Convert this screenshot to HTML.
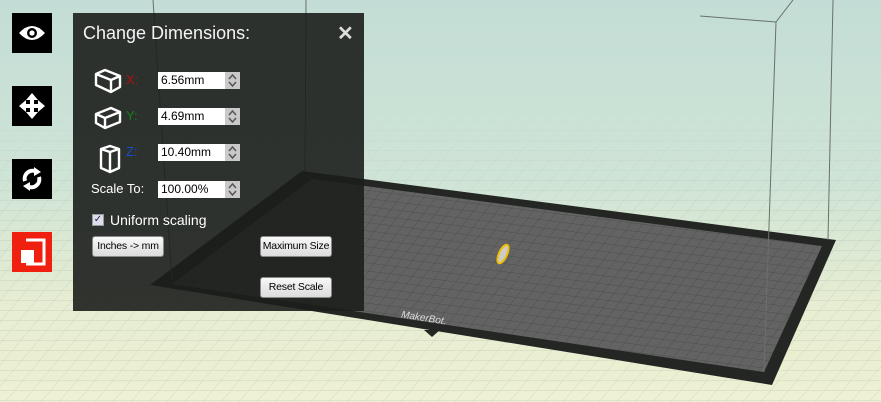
<!DOCTYPE html>
<html><head><meta charset="utf-8"><style>
*{margin:0;padding:0;box-sizing:border-box}
body{width:881px;height:402px;overflow:hidden;position:relative;font-family:"Liberation Sans",sans-serif;background:linear-gradient(180deg,#c3ddd6 0%,#cfe4d6 45%,#e6edd2 75%,#eef1d3 100%)}
svg.bg{position:absolute;left:0;top:0}
.tb{position:absolute;left:12px;width:40px;height:40px;background:#000;display:flex;align-items:center;justify-content:center}
.panel{position:absolute;left:73px;top:13px;width:291px;height:298px;background:rgba(28,30,28,0.9);color:#fff}
.title{position:absolute;left:10px;top:10px;font-size:18px;color:#f4f4f4}
.close{position:absolute;left:264px;top:8px;font-size:20px;color:#ddd;font-weight:bold}
.inp{position:absolute;left:85px;width:82px;height:17px;background:#fff;color:#000;font-size:12px;line-height:17px;padding-left:3px}
.inp .sp{position:absolute;right:0;top:0;width:15px;height:17px;background:#c9c9c9}
.lbl{position:absolute;left:53px;font-size:13px}
.btn{position:absolute;height:21px;background:linear-gradient(#f8f8f8,#dcdcdc);border:1px solid #888;border-radius:3px;color:#000;font-size:10.5px;line-height:19px;text-align:center;white-space:nowrap;letter-spacing:-0.2px}
</style></head><body>
<svg class="bg" width="881" height="402">
<defs>
<pattern id="g" width="18" height="10" patternUnits="userSpaceOnUse" patternTransform="skewX(-40)">
<path d="M0 0H18M0 0V10" stroke="#9aa79a" stroke-width="0.6" fill="none"/>
</pattern>
<linearGradient id="fade" x1="0" y1="0" x2="0" y2="1"><stop offset="0" stop-color="#fff" stop-opacity="0"/><stop offset="0.4" stop-color="#fff" stop-opacity="0.6"/><stop offset="1" stop-color="#fff" stop-opacity="0.6"/></linearGradient>
<mask id="m"><rect x="0" y="100" width="881" height="302" fill="url(#fade)"/></mask>
<pattern id="g2" width="11" height="8" patternUnits="userSpaceOnUse" patternTransform="rotate(7) skewX(-30)">
<path d="M0 0H11M0 0V8" stroke="#444" stroke-width="0.7" fill="none"/>
</pattern>
<symbol id="sp" viewBox="0 0 15 17"><path d="M4 7L7.5 3L11 7M4 10L7.5 14L11 10" stroke="#555" stroke-width="1.5" fill="none"/></symbol>
</defs>
<rect x="0" y="100" width="881" height="302" fill="url(#g)" mask="url(#m)"/>
<polygon points="302,171 836,240 772,385 150,285" fill="#232623"/>
<polygon points="312,179 822,246 764,372 172,284" fill="#636363"/>
<polygon points="312,179 822,246 764,372 172,284" fill="url(#g2)"/>
<text x="400" y="322" fill="#ddd" font-size="10" font-style="italic" transform="rotate(9 430 325)" font-family="Liberation Sans">MakerBot.</text>
<polygon points="424,330 440,330 432,337" fill="#232623"/>
<ellipse cx="503" cy="254" rx="4" ry="10" transform="rotate(25 503 254)" fill="#ccc" stroke="#f0c000" stroke-width="2"/>
<g stroke="#6a6f6c" stroke-width="1" fill="none">
<path d="M700 16L776 22L793 0M776 22L764 372M833 0L828 240M153 0L172 280M306 0L305 172"/>
</g>
</svg>
<div class="tb" style="top:13px"><svg width="30" height="20" viewBox="0 0 30 20"><path d="M2 10Q15 -4 28 10Q15 24 2 10Z" fill="#fff"/><circle cx="15" cy="10" r="5" fill="#000"/><circle cx="15" cy="10" r="2.6" fill="#fff"/></svg></div>
<div class="tb" style="top:86px"><svg width="28" height="28" viewBox="0 0 28 28" fill="#fff"><path d="M14 1L20 8H16V12H20V8L27 14L20 20V16H16V20H20L14 27L8 20H12V16H8V20L1 14L8 8V12H12V8H8Z"/></svg></div>
<div class="tb" style="top:159px"><svg width="24" height="26" viewBox="0 0 24 26" fill="none" stroke="#fff" stroke-width="4"><path d="M5 15A8 8 0 0 1 17 6"/><path d="M19 11A8 8 0 0 1 7 20"/><path d="M14 1L21 6L14 10Z" fill="#fff" stroke="none"/><path d="M10 25L3 20L10 16Z" fill="#fff" stroke="none"/></svg></div>
<div class="tb" style="top:232px;background:#f02010"><svg width="28" height="28" viewBox="0 0 28 28"><path d="M8 2H26V26H8" stroke="#fff" stroke-width="3" fill="none"/><rect x="3" y="12" width="13" height="13" fill="#fff"/></svg></div>
<div class="panel">
<div class="title">Change Dimensions:</div>
<div class="close">✕</div>
<svg style="position:absolute;left:20px;top:55px" width="30" height="120" viewBox="0 0 30 120" fill="none" stroke="#fff" stroke-width="2.4" stroke-linejoin="round">
<path d="M3 6L12 2L27 8L27 19L18 24L3 17Z M3 6L18 12L27 8 M18 12L18 24"/>
<path d="M3 46L18 40L27 44L27 54L12 60L3 55Z M3 46L12 50L27 44 M12 50L12 60" />
<path d="M8 81L17 78L26 81L26 100L17 104L8 100Z M8 81L17 84L26 81 M17 84V104"/>
</svg>
<div class="lbl" style="top:59px;color:#b01010">X:</div>
<div class="lbl" style="top:95px;color:#108010">Y:</div>
<div class="lbl" style="top:131px;color:#1050d0">Z:</div>
<div class="inp" style="top:59px">6.56mm<svg class="sp" width="15" height="17"><use href="#sp"/></svg></div>
<div class="inp" style="top:95px">4.69mm<svg class="sp" width="15" height="17"><use href="#sp"/></svg></div>
<div class="inp" style="top:131px">10.40mm<svg class="sp" width="15" height="17"><use href="#sp"/></svg></div>
<div style="position:absolute;left:18px;top:168px;font-size:13px">Scale To:</div>
<div class="inp" style="top:168px">100.00%<svg class="sp" width="15" height="17"><use href="#sp"/></svg></div>
<div style="position:absolute;left:19px;top:201px;width:12px;height:12px;background:#dde;border:1px solid #999;color:#224;font-size:10px;line-height:10px;text-align:center">✓</div>
<div style="position:absolute;left:37px;top:199px;font-size:14px">Uniform scaling</div>
<div class="btn" style="left:19px;top:223px;width:72px">Inches -&gt; mm</div>
<div class="btn" style="left:187px;top:223px;width:72px">Maximum Size</div>
<div class="btn" style="left:187px;top:264px;width:72px">Reset Scale</div>
</div>
</body></html>
